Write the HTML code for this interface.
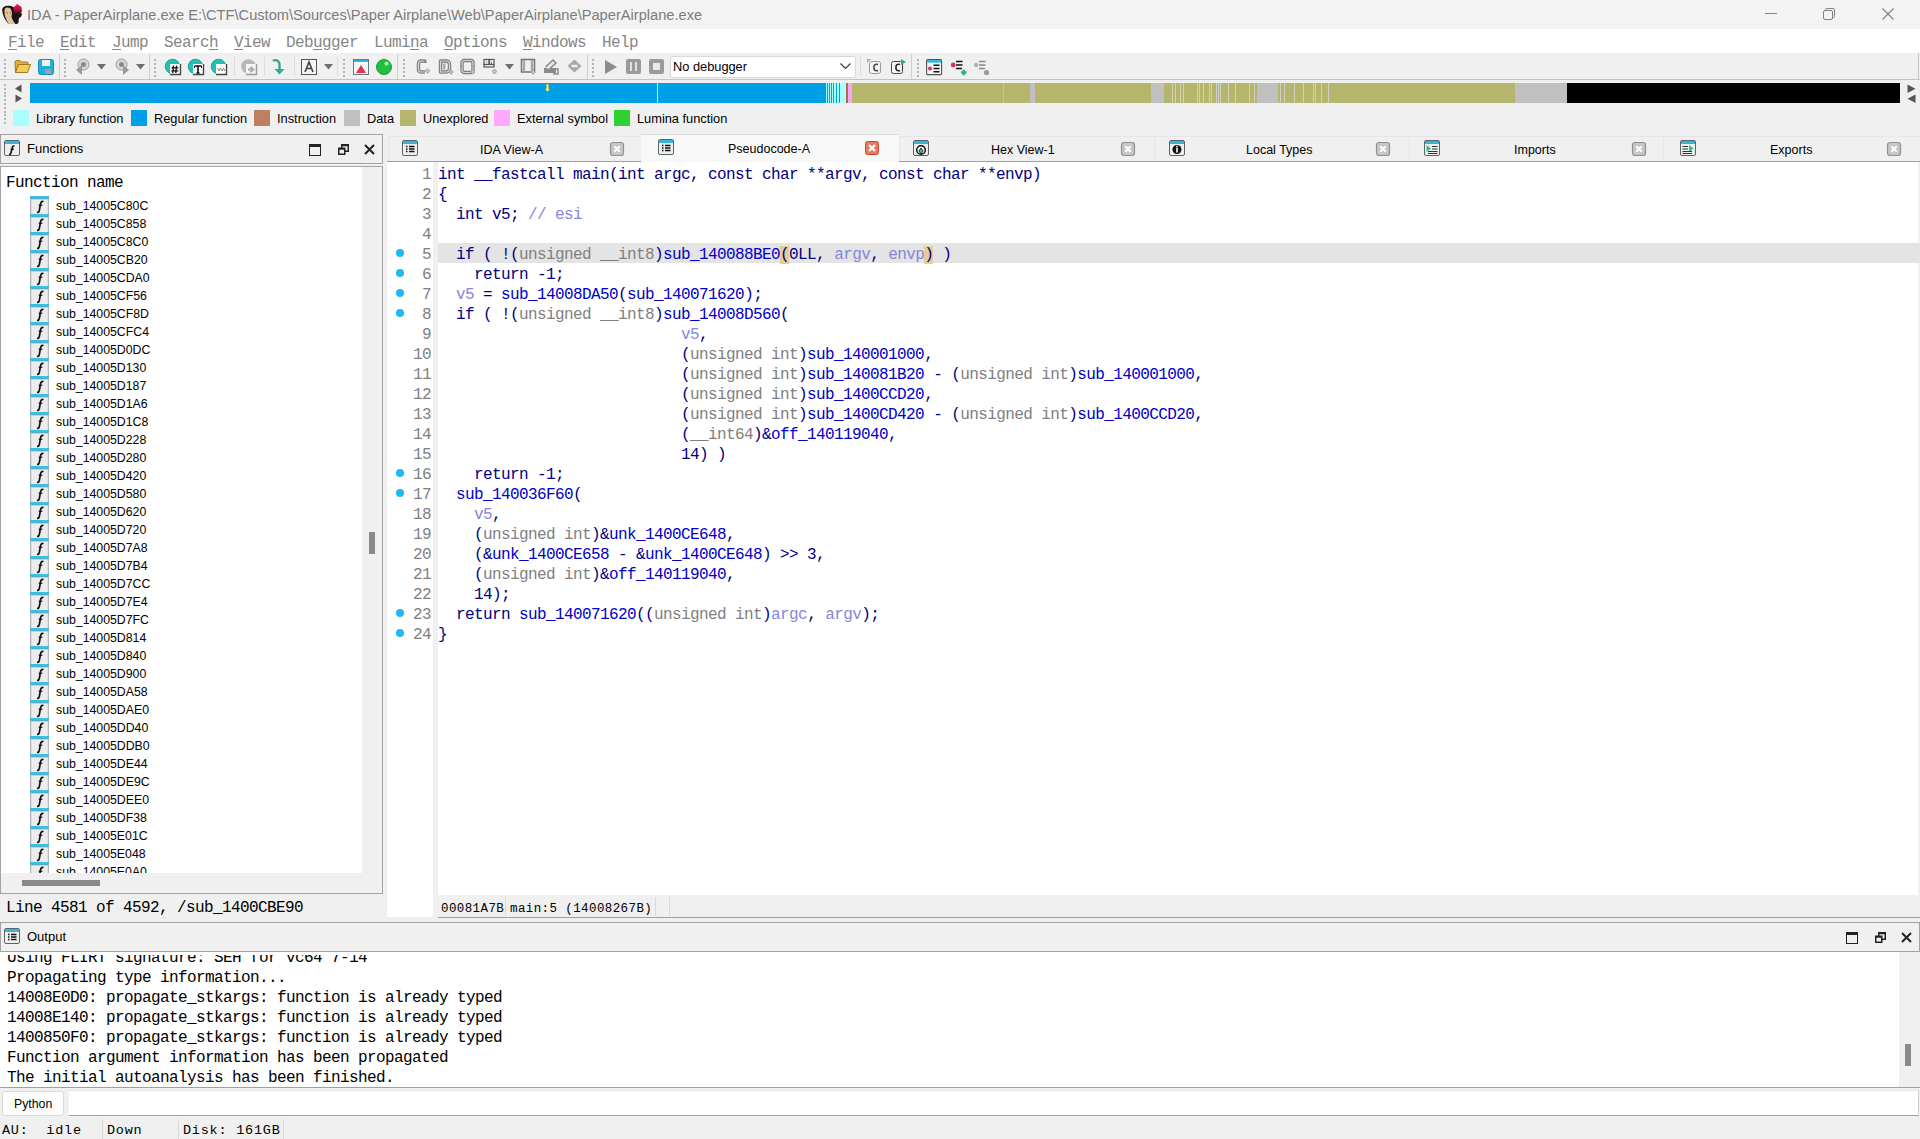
<!DOCTYPE html><html><head><meta charset="utf-8"><style>
*{margin:0;padding:0;box-sizing:border-box}
html,body{width:1920px;height:1139px;overflow:hidden;background:#f0f0f0;font-family:"Liberation Sans",sans-serif}
body{position:relative}
.a{position:absolute}
.m{font-family:"Liberation Mono",monospace;white-space:pre}
.s{font-family:"Liberation Sans",sans-serif;white-space:pre}
.mi{top:33px;font-size:16px;letter-spacing:-0.6px;color:#868686;line-height:20px}
.mi u{text-decoration:underline;text-underline-offset:1.5px}
.code{font-family:"Liberation Mono",monospace;font-size:16px;letter-spacing:-0.6px;line-height:20px;white-space:pre;color:#000080}
.g{color:#808080}.b{color:#0000c8}.p{color:#8686da}.c{color:#8686da}
.ln{font-family:"Liberation Mono",monospace;font-size:16px;letter-spacing:-0.6px;line-height:20px;white-space:pre;color:#808080;text-align:right}
svg{position:absolute;overflow:visible}
</style></head><body>
<div class="a" style="left:0;top:0;width:1920px;height:29px;background:#f3f3f3"></div>
<svg style="left:0;top:0" width="28" height="28" viewBox="0 0 28 28">
<defs><linearGradient id="fl" x1="0" y1="0" x2="0" y2="1"><stop offset="0" stop-color="#f01860"/><stop offset="0.55" stop-color="#c01048"/><stop offset="1" stop-color="#401020"/></linearGradient></defs>
<path d="M2.2 10.5 C2 7 5 5.5 9 5.8 C12 6 14 7 16 9 L21.5 13 C22.5 15.5 21 17.5 19 18 L18.5 21 C19 23 18 24 16 24 L8.5 24 C6 21 3 17 2.2 10.5Z" fill="#1c1412"/>
<path d="M4.6 9.5 C5 7.2 8.5 7 10.5 8.5 C12 10.5 12.3 13.5 11.5 16.5 C12 19 13.5 21.5 15.5 24 L8.5 24 C7.5 21.5 6.5 20 6 18.5 C4.5 16 4.2 12.5 4.6 9.5Z" fill="#dfc49a"/>
<path d="M6 13 Q7 12.5 8 13 M9.5 13 Q10.5 12.5 11 13" stroke="#8a7050" stroke-width="0.8" fill="none"/>
<path d="M13.5 7.5 L17 4 L21.5 7 L22 11.5 L19.5 13.5 L14.5 13 Z" fill="url(#fl)"/>
</svg>
<div class="a s" style="left:27px;top:6px;font-size:14.65px;line-height:18px;color:#7c7c7c">IDA - PaperAirplane.exe E:\CTF\Custom\Sources\Paper Airplane\Web\PaperAirplane\PaperAirplane.exe</div>
<div class="a" style="left:1765px;top:13px;width:12px;height:1px;background:#808080"></div>
<svg style="left:1823px;top:8px" width="12" height="12"><rect x="0.5" y="2.5" width="9" height="9" rx="1.5" fill="none" stroke="#808080"/><path d="M2.5 2.5 V1.5 Q2.5 .5 3.5 .5 H10 Q11.5 .5 11.5 2 V8.5 Q11.5 9.5 10.5 9.5 H9.5" fill="none" stroke="#808080"/></svg>
<svg style="left:1882px;top:8px" width="12" height="12"><path d="M0.5 0.5 L11.5 11.5 M11.5 0.5 L0.5 11.5" stroke="#808080" stroke-width="1.1"/></svg>
<div class="a" style="left:0;top:29px;width:1920px;height:24px;background:#fff"></div>
<div class="a m mi" style="left:8px"><u>F</u>ile</div>
<div class="a m mi" style="left:60px"><u>E</u>dit</div>
<div class="a m mi" style="left:112px"><u>J</u>ump</div>
<div class="a m mi" style="left:164px">Searc<u>h</u></div>
<div class="a m mi" style="left:234px"><u>V</u>iew</div>
<div class="a m mi" style="left:286px">Deb<u>u</u>gger</div>
<div class="a m mi" style="left:374px">Lumi<u>n</u>a</div>
<div class="a m mi" style="left:444px"><u>O</u>ptions</div>
<div class="a m mi" style="left:523px"><u>W</u>indows</div>
<div class="a m mi" style="left:602px">Help</div>
<div class="a" style="left:0;top:53px;width:1920px;height:27px;background:#f0f0f0;border-bottom:1px solid #c4c4c4"></div>
<div class="a" style="left:1918px;top:53px;width:1px;height:27px;background:#c8c8c8"></div>
<div class="a" style="left:4px;top:58.5px;width:2px;height:2px;background:#b4b4b4"></div>
<div class="a" style="left:4px;top:62.5px;width:2px;height:2px;background:#b4b4b4"></div>
<div class="a" style="left:4px;top:66.5px;width:2px;height:2px;background:#b4b4b4"></div>
<div class="a" style="left:4px;top:70.5px;width:2px;height:2px;background:#b4b4b4"></div>
<div class="a" style="left:4px;top:74.5px;width:2px;height:2px;background:#b4b4b4"></div>
<div class="a" style="left:64px;top:58.5px;width:2px;height:2px;background:#b4b4b4"></div>
<div class="a" style="left:64px;top:62.5px;width:2px;height:2px;background:#b4b4b4"></div>
<div class="a" style="left:64px;top:66.5px;width:2px;height:2px;background:#b4b4b4"></div>
<div class="a" style="left:64px;top:70.5px;width:2px;height:2px;background:#b4b4b4"></div>
<div class="a" style="left:64px;top:74.5px;width:2px;height:2px;background:#b4b4b4"></div>
<div class="a" style="left:154px;top:58.5px;width:2px;height:2px;background:#b4b4b4"></div>
<div class="a" style="left:154px;top:62.5px;width:2px;height:2px;background:#b4b4b4"></div>
<div class="a" style="left:154px;top:66.5px;width:2px;height:2px;background:#b4b4b4"></div>
<div class="a" style="left:154px;top:70.5px;width:2px;height:2px;background:#b4b4b4"></div>
<div class="a" style="left:154px;top:74.5px;width:2px;height:2px;background:#b4b4b4"></div>
<div class="a" style="left:343px;top:58.5px;width:2px;height:2px;background:#b4b4b4"></div>
<div class="a" style="left:343px;top:62.5px;width:2px;height:2px;background:#b4b4b4"></div>
<div class="a" style="left:343px;top:66.5px;width:2px;height:2px;background:#b4b4b4"></div>
<div class="a" style="left:343px;top:70.5px;width:2px;height:2px;background:#b4b4b4"></div>
<div class="a" style="left:343px;top:74.5px;width:2px;height:2px;background:#b4b4b4"></div>
<div class="a" style="left:403px;top:58.5px;width:2px;height:2px;background:#b4b4b4"></div>
<div class="a" style="left:403px;top:62.5px;width:2px;height:2px;background:#b4b4b4"></div>
<div class="a" style="left:403px;top:66.5px;width:2px;height:2px;background:#b4b4b4"></div>
<div class="a" style="left:403px;top:70.5px;width:2px;height:2px;background:#b4b4b4"></div>
<div class="a" style="left:403px;top:74.5px;width:2px;height:2px;background:#b4b4b4"></div>
<div class="a" style="left:592px;top:58.5px;width:2px;height:2px;background:#b4b4b4"></div>
<div class="a" style="left:592px;top:62.5px;width:2px;height:2px;background:#b4b4b4"></div>
<div class="a" style="left:592px;top:66.5px;width:2px;height:2px;background:#b4b4b4"></div>
<div class="a" style="left:592px;top:70.5px;width:2px;height:2px;background:#b4b4b4"></div>
<div class="a" style="left:592px;top:74.5px;width:2px;height:2px;background:#b4b4b4"></div>
<div class="a" style="left:917px;top:58.5px;width:2px;height:2px;background:#b4b4b4"></div>
<div class="a" style="left:917px;top:62.5px;width:2px;height:2px;background:#b4b4b4"></div>
<div class="a" style="left:917px;top:66.5px;width:2px;height:2px;background:#b4b4b4"></div>
<div class="a" style="left:917px;top:70.5px;width:2px;height:2px;background:#b4b4b4"></div>
<div class="a" style="left:917px;top:74.5px;width:2px;height:2px;background:#b4b4b4"></div>
<div class="a" style="left:59px;top:54px;width:1px;height:25px;background:#d0d0d0"></div>
<div class="a" style="left:149px;top:54px;width:1px;height:25px;background:#d0d0d0"></div>
<div class="a" style="left:397px;top:54px;width:1px;height:25px;background:#d0d0d0"></div>
<div class="a" style="left:587px;top:54px;width:1px;height:25px;background:#d0d0d0"></div>
<div class="a" style="left:911px;top:54px;width:1px;height:25px;background:#d0d0d0"></div>
<div class="a" style="left:234px;top:57px;width:1px;height:19px;background:#dcdcdc"></div>
<div class="a" style="left:264px;top:57px;width:1px;height:19px;background:#dcdcdc"></div>
<div class="a" style="left:294px;top:57px;width:1px;height:19px;background:#dcdcdc"></div>
<div class="a" style="left:337px;top:57px;width:1px;height:19px;background:#dcdcdc"></div>
<div class="a" style="left:860px;top:57px;width:1px;height:19px;background:#dcdcdc"></div>
<svg style="left:14px;top:59px" width="17" height="15"><path d="M1 3 Q1 1.5 2.5 1.5 H6 L7.5 3 H13 Q14 3 14 4 V5.5 H4.5 L1.5 13.5Z" fill="#e0b040" stroke="#a07820" stroke-width="1"/><path d="M4.5 5.5 H16.5 L13.5 13.5 H1.5Z" fill="#f5cc5a" stroke="#a07820" stroke-width="1"/></svg>
<svg style="left:38px;top:59px" width="16" height="16"><rect x="0.5" y="0.5" width="15" height="15" rx="2" fill="#20b0e0" stroke="#1090c0"/><rect x="4" y="1" width="8" height="6" fill="#f0f0f0"/><rect x="7" y="10" width="6" height="5" fill="#a0a0a0"/></svg>
<svg style="left:75px;top:58px" width="15" height="17"><circle cx="8.5" cy="6.5" r="5.5" fill="#d8d8d8" stroke="#9a9a9a"/><circle cx="8.5" cy="6.5" r="2.5" fill="#8a8a8a"/><path d="M1 12 L7 7 V17Z" fill="#9a9a9a"/></svg>
<svg style="left:97px;top:64px" width="10" height="6"><path d="M0 0 H9 L4.5 5.5Z" fill="#6e6e6e"/></svg>
<svg style="left:115px;top:58px" width="15" height="17"><circle cx="6.5" cy="6.5" r="5.5" fill="#d8d8d8" stroke="#9a9a9a"/><circle cx="6.5" cy="6.5" r="2.5" fill="#8a8a8a"/><path d="M14 12 L8 7 V17Z" fill="#9a9a9a"/></svg>
<svg style="left:136px;top:64px" width="10" height="6"><path d="M0 0 H9 L4.5 5.5Z" fill="#6e6e6e"/></svg>
<svg style="left:165px;top:59px" width="17" height="17"><circle cx="7.5" cy="7.5" r="7.3" fill="#22c0b0" stroke="#139888" stroke-width="0.8"/><rect x="5" y="5" width="10.5" height="10.5" fill="#fff"/><path d="M15.5 5 V15.5 H5" stroke="#444" stroke-width="1.4" fill="none"/><path d="M8.5 6.5 L7.8 14 M11.5 6.5 L10.8 14 M6.5 8.8 H13.5 M6.3 11.8 H13.3" stroke="#111" stroke-width="1.3"/></svg>
<svg style="left:188px;top:59px" width="17" height="17"><circle cx="7.5" cy="7.5" r="7.3" fill="#22c0b0" stroke="#139888" stroke-width="0.8"/><rect x="5" y="5" width="10.5" height="10.5" fill="#fff"/><path d="M15.5 5 V15.5 H5" stroke="#444" stroke-width="1.4" fill="none"/><path d="M6.5 7 H13.5 M10 7 V14 M8.5 14 H11.5" stroke="#111" stroke-width="1.6"/><path d="M6.5 7 V9 M13.5 7 V9" stroke="#111" stroke-width="1"/></svg>
<svg style="left:211px;top:59px" width="17" height="17"><circle cx="7.5" cy="7.5" r="7.3" fill="#22c0b0" stroke="#139888" stroke-width="0.8"/><rect x="5" y="5" width="10.5" height="10.5" fill="#fff"/><path d="M15.5 5 V15.5 H5" stroke="#444" stroke-width="1.4" fill="none"/><path d="M6.5 9 L8 12 L9.5 9 L11 12 L12.5 9 L14 12" stroke="#888" stroke-width="1" fill="none"/></svg>
<svg style="left:241px;top:59px" width="17" height="17"><circle cx="7.5" cy="7.5" r="7.3" fill="#b8b8b8"/><rect x="5" y="5" width="10.5" height="10.5" fill="#f4f4f4"/><path d="M15.5 5 V15.5 H5" stroke="#999" stroke-width="1.4" fill="none"/><path d="M7 10.5 H11 M9.5 8 L12.5 10.5 L9.5 13" stroke="#aaa" stroke-width="1.8" fill="none"/></svg>
<svg style="left:272px;top:59px" width="14" height="17"><path d="M1 2 Q2 0.8 4 1.2 Q7.5 2 7.5 6 V11" stroke="#3aa898" stroke-width="2.4" fill="none"/><path d="M2.5 10 H12.5 L7.5 15.5Z" fill="#3aa898"/></svg>
<svg style="left:301px;top:59px" width="17" height="16"><rect x="0.5" y="0.5" width="15" height="15" fill="#f4f4f4" stroke="#555"/><path d="M4 13 L8 3 L12 13 M5.5 9.5 H10.5" stroke="#444" stroke-width="1.6" fill="none"/></svg>
<svg style="left:324px;top:64px" width="10" height="6"><path d="M0 0 H9 L4.5 5.5Z" fill="#6e6e6e"/></svg>
<svg style="left:353px;top:59px" width="17" height="17"><rect x="0.5" y="0.5" width="15" height="15" fill="#f8f8f8" stroke="#6a7a80"/><rect x="1" y="1" width="14" height="2" fill="#30b0e0"/><path d="M3 14 L8 6 L13 14Z" fill="#e8304a"/></svg>
<svg style="left:376px;top:59px" width="17" height="17"><circle cx="8" cy="8" r="7.5" fill="#20c040" stroke="#10a030"/><circle cx="10.5" cy="4.5" r="2" fill="#b0f0b8"/></svg>
<svg style="left:416px;top:58px" width="15" height="17"><path d="M9.5 3 H5 Q2.5 3 2.5 5.5 V11.5 Q2.5 14 5 14 H9" stroke="#7c7c7c" stroke-width="3.4" fill="none" stroke-linejoin="round"/><path d="M9.5 3 H5 Q2.5 3 2.5 5.5 V11.5 Q2.5 14 5 14 H9" stroke="#d6d6d6" stroke-width="1.2" fill="none" stroke-linejoin="round"/><path d="M9.5 2 V5" stroke="#7c7c7c" stroke-width="2"/><path d="M9.3 13 H13.7 M11.5 10.8 V15.2" stroke="#9a9a9a" stroke-width="2.2"/><path d="M10.3 13 H12.7 M11.5 11.8 V14.2" stroke="#e0e0e0" stroke-width="0.8"/></svg>
<svg style="left:438px;top:58px" width="16" height="17"><path d="M2.5 3 H8 Q11.5 3 11.5 6.5 V10.5 Q11.5 14 8 14 H2.5Z" stroke="#7c7c7c" stroke-width="3.4" fill="none" stroke-linejoin="round"/><path d="M2.5 3 H8 Q11.5 3 11.5 6.5 V10.5 Q11.5 14 8 14 H2.5Z" stroke="#d6d6d6" stroke-width="1.2" fill="none" stroke-linejoin="round"/><rect x="5" y="5.5" width="2.5" height="6" fill="#aaa"/><path d="M10.8 14 H15.2 M13 11.8 V16.2" stroke="#9a9a9a" stroke-width="2.2"/><path d="M11.8 14 H14.2 M13 12.8 V15.2" stroke="#e0e0e0" stroke-width="0.8"/></svg>
<svg style="left:460px;top:58px" width="16" height="17"><path d="M4.5 2.5 H11 Q13 2.5 13 5 V12 Q13 14.5 11 14.5 H4.5 Q2 14.5 2 12 V5 Q2 2.5 4.5 2.5Z" stroke="#7c7c7c" stroke-width="3.4" fill="none" stroke-linejoin="round"/><path d="M4.5 2.5 H11 Q13 2.5 13 5 V12 Q13 14.5 11 14.5 H4.5 Q2 14.5 2 12 V5 Q2 2.5 4.5 2.5Z" stroke="#d6d6d6" stroke-width="1.2" fill="none" stroke-linejoin="round"/><path d="M1 8.5 H2 M13 8.5 H14" stroke="#888" stroke-width="1.5"/><path d="M10.3 14 H14.7 M12.5 11.8 V16.2" stroke="#9a9a9a" stroke-width="2.2"/><path d="M11.3 14 H13.7 M12.5 12.8 V15.2" stroke="#e0e0e0" stroke-width="0.8"/></svg>
<svg style="left:483px;top:58px" width="16" height="17"><rect x="1" y="1.5" width="5" height="5" fill="#f4f4f4" stroke="#555" stroke-width="1.2"/><rect x="6.5" y="1.5" width="4.5" height="5" fill="#f4f4f4" stroke="#555" stroke-width="1.2"/><rect x="1" y="6.5" width="10" height="2.5" fill="#f4f4f4" stroke="#555" stroke-width="1.2"/><path d="M3 4 H4 M8.5 4 V6" stroke="#777" stroke-width="1"/><path d="M9.3 13.5 H13.7 M11.5 11.3 V15.7" stroke="#9a9a9a" stroke-width="2.2"/><path d="M10.3 13.5 H12.7 M11.5 12.3 V14.7" stroke="#e0e0e0" stroke-width="0.8"/></svg>
<svg style="left:505px;top:64px" width="10" height="6"><path d="M0 0 H9 L4.5 5.5Z" fill="#6e6e6e"/></svg>
<svg style="left:520px;top:58px" width="17" height="17"><rect x="1.5" y="1.5" width="13" height="12.5" fill="none" stroke="#7a7a7a" stroke-width="1.6"/><path d="M4 2 V13.5 M12 2 V13.5" stroke="#a8a8a8" stroke-width="2.4"/><path d="M10.8 14 H15.2 M13 11.8 V16.2" stroke="#9a9a9a" stroke-width="2.2"/><path d="M11.8 14 H14.2 M13 12.8 V15.2" stroke="#e0e0e0" stroke-width="0.8"/></svg>
<svg style="left:543px;top:58px" width="17" height="17"><path d="M1 10 H13 V15 H1Z" fill="#8a8a8a"/><path d="M2.5 9 L10 2 L13 5 L6 11.5" fill="#e8e8e8" stroke="#8a8a8a" stroke-width="1.5"/><path d="M13 11 H15 V16 H10" stroke="#8a8a8a" stroke-width="1.5" fill="none"/></svg>
<svg style="left:567px;top:58px" width="16" height="17"><path d="M7.5 1.5 L14.5 8 L7.5 14.5 L0.5 8Z" fill="#a8a8a8"/><rect x="4.5" y="6.8" width="6" height="2.4" fill="#f0f0f0"/></svg>
<svg style="left:604px;top:59px" width="14" height="16"><path d="M1 1 L13 8 L1 15Z" fill="#8c8c8c"/></svg>
<div class="a" style="left:626px;top:59px;width:15px;height:15px;background:#9a9a9a;border-radius:2px"></div><div class="a" style="left:630px;top:62px;width:2px;height:9px;background:#e0e0e0"></div><div class="a" style="left:635px;top:62px;width:2px;height:9px;background:#e0e0e0"></div>
<div class="a" style="left:649px;top:59px;width:15px;height:15px;background:#9a9a9a;border-radius:2px"></div><div class="a" style="left:653px;top:63px;width:7px;height:7px;background:#e8e8e8"></div>
<div class="a" style="left:670px;top:56px;width:186px;height:22px;background:#fff;border:1px solid #d8d8d8;border-radius:2px"></div>
<div class="a s" style="left:673px;top:59px;font-size:12.8px;line-height:16px;color:#000">No debugger</div>
<svg style="left:840px;top:63px" width="11" height="7"><path d="M0.5 0.5 L5.5 5.5 L10.5 0.5" stroke="#333" fill="none" stroke-width="1.1"/></svg>
<svg style="left:866px;top:58px" width="17" height="17"><rect x="3.5" y="3.5" width="11" height="12" rx="2" fill="#f4f4f4" stroke="#999"/><path d="M1 1 L5 1 L1 5Z" fill="#aaa"/><path d="M12 6.5 Q9 5.5 8 8 V11 Q9 13.5 12 12.5" stroke="#444" stroke-width="1.6" fill="none"/></svg>
<svg style="left:890px;top:58px" width="17" height="17"><rect x="1.5" y="3.5" width="11" height="12" rx="2" fill="#f4f4f4" stroke="#444"/><path d="M10 6.5 Q7 5.5 6 8 V11 Q7 13.5 10 12.5" stroke="#222" stroke-width="1.6" fill="none"/><path d="M11 1 L16 4 L11 7Z" fill="#30b070"/></svg>
<svg style="left:926px;top:59px" width="17" height="17"><rect x="0.6" y="0.6" width="15" height="15" rx="1.2" fill="#f6f6f6" stroke="#505050" stroke-width="1.1"/><rect x="1.1" y="1.1" width="14" height="2.6" fill="#30b8e0"/><circle cx="4" cy="9.5" r="2" fill="#e03058"/><path d="M7.5 6.3 H13.5 M7.5 9.5 H13.5 M7.5 12.7 H13.5" stroke="#111" stroke-width="1.5"/></svg>
<svg style="left:950px;top:58px" width="18" height="18"><circle cx="3.2" cy="7" r="2.4" fill="#e03058"/><path d="M6 3.5 H12.5 M6 7 H12.5 M6 10.5 H12" stroke="#111" stroke-width="1.7"/><path d="M11 14.5 H16.5 M13.75 11.8 V17.2" stroke="#30b880" stroke-width="2.6"/></svg>
<svg style="left:973px;top:58px" width="18" height="18"><circle cx="3.2" cy="7" r="2.2" fill="#b0b0b0"/><path d="M6 3.5 H12.5 M6 7 H12.5 M6 10.5 H12" stroke="#888" stroke-width="1.7"/><circle cx="13.5" cy="14.5" r="2.6" fill="#999"/></svg>
<div class="a" style="left:4px;top:84.0px;width:2px;height:2px;background:#b4b4b4"></div>
<div class="a" style="left:4px;top:87.8px;width:2px;height:2px;background:#b4b4b4"></div>
<div class="a" style="left:4px;top:91.6px;width:2px;height:2px;background:#b4b4b4"></div>
<div class="a" style="left:4px;top:95.4px;width:2px;height:2px;background:#b4b4b4"></div>
<div class="a" style="left:4px;top:99.2px;width:2px;height:2px;background:#b4b4b4"></div>
<div class="a" style="left:4px;top:103.0px;width:2px;height:2px;background:#b4b4b4"></div>
<div class="a" style="left:4px;top:106.8px;width:2px;height:2px;background:#b4b4b4"></div>
<div class="a" style="left:4px;top:110.6px;width:2px;height:2px;background:#b4b4b4"></div>
<div class="a" style="left:4px;top:114.4px;width:2px;height:2px;background:#b4b4b4"></div>
<div class="a" style="left:4px;top:118.2px;width:2px;height:2px;background:#b4b4b4"></div>
<div class="a" style="left:4px;top:122.0px;width:2px;height:2px;background:#b4b4b4"></div>
<svg style="left:15px;top:84px" width="8" height="19"><path d="M6.5 0.5 V8.5 L0 4.5Z" fill="#555"/><path d="M0.5 10.5 V18.5 L7 14.5Z" fill="#555"/></svg>
<svg style="left:1907px;top:84px" width="9" height="20"><path d="M0.5 0.5 V9 L8.5 4.75Z" fill="#555"/><path d="M8.5 10.5 V19 L0.5 14.75Z" fill="#555"/></svg>
<div class="a" style="left:30px;top:83px;width:796px;height:20px;background:#00a0e6"></div>
<div class="a" style="left:826px;top:83px;width:20px;height:20px;background:#a8ffff"></div>
<div class="a" style="left:846px;top:83px;width:2px;height:20px;background:#b06a50"></div>
<div class="a" style="left:848px;top:83px;width:4px;height:20px;background:#f0a8f0"></div>
<div class="a" style="left:852px;top:83px;width:299px;height:20px;background:#b5b56b"></div>
<div class="a" style="left:1151px;top:83px;width:13px;height:20px;background:#c0c0c0"></div>
<div class="a" style="left:1164px;top:83px;width:93px;height:20px;background:#b5b56b"></div>
<div class="a" style="left:1257px;top:83px;width:21px;height:20px;background:#c0c0c0"></div>
<div class="a" style="left:1278px;top:83px;width:237px;height:20px;background:#b5b56b"></div>
<div class="a" style="left:1515px;top:83px;width:52px;height:20px;background:#c0c0c0"></div>
<div class="a" style="left:1567px;top:83px;width:333px;height:20px;background:#000"></div>
<div class="a" style="left:827px;top:83px;width:1px;height:20px;background:#00a0e6"></div>
<div class="a" style="left:829px;top:83px;width:1px;height:20px;background:#00a0e6"></div>
<div class="a" style="left:831px;top:83px;width:1px;height:20px;background:#00a0e6"></div>
<div class="a" style="left:833px;top:83px;width:1px;height:20px;background:#00a0e6"></div>
<div class="a" style="left:836px;top:83px;width:1px;height:20px;background:#00a0e6"></div>
<div class="a" style="left:839px;top:83px;width:1px;height:20px;background:#00a0e6"></div>
<div class="a" style="left:657px;top:83px;width:1px;height:20px;background:#a8ffff"></div>
<div class="a" style="left:1003px;top:83px;width:1px;height:20px;background:#c0c0c0"></div>
<div class="a" style="left:1030px;top:83px;width:1px;height:20px;background:#c0c0c0"></div>
<div class="a" style="left:1031px;top:83px;width:1px;height:20px;background:#c0c0c0"></div>
<div class="a" style="left:1032px;top:83px;width:1px;height:20px;background:#c0c0c0"></div>
<div class="a" style="left:1033px;top:83px;width:1px;height:20px;background:#c0c0c0"></div>
<div class="a" style="left:1034px;top:83px;width:1px;height:20px;background:#c0c0c0"></div>
<div class="a" style="left:1172px;top:83px;width:1px;height:20px;background:#d0d0c0"></div>
<div class="a" style="left:1175px;top:83px;width:1px;height:20px;background:#d0d0c0"></div>
<div class="a" style="left:1180px;top:83px;width:1px;height:20px;background:#d0d0c0"></div>
<div class="a" style="left:1183px;top:83px;width:1px;height:20px;background:#d0d0c0"></div>
<div class="a" style="left:1197px;top:83px;width:1px;height:20px;background:#d0d0c0"></div>
<div class="a" style="left:1199px;top:83px;width:1px;height:20px;background:#d0d0c0"></div>
<div class="a" style="left:1203px;top:83px;width:1px;height:20px;background:#d0d0c0"></div>
<div class="a" style="left:1209px;top:83px;width:1px;height:20px;background:#d0d0c0"></div>
<div class="a" style="left:1211px;top:83px;width:1px;height:20px;background:#d0d0c0"></div>
<div class="a" style="left:1216px;top:83px;width:1px;height:20px;background:#d0d0c0"></div>
<div class="a" style="left:1218px;top:83px;width:1px;height:20px;background:#d0d0c0"></div>
<div class="a" style="left:1220px;top:83px;width:1px;height:20px;background:#d0d0c0"></div>
<div class="a" style="left:1228px;top:83px;width:1px;height:20px;background:#d0d0c0"></div>
<div class="a" style="left:1235px;top:83px;width:1px;height:20px;background:#d0d0c0"></div>
<div class="a" style="left:1249px;top:83px;width:1px;height:20px;background:#d0d0c0"></div>
<div class="a" style="left:1254px;top:83px;width:1px;height:20px;background:#d0d0c0"></div>
<div class="a" style="left:1280px;top:83px;width:1px;height:20px;background:#d0d0c0"></div>
<div class="a" style="left:1284px;top:83px;width:1px;height:20px;background:#d0d0c0"></div>
<div class="a" style="left:1294px;top:83px;width:1px;height:20px;background:#d0d0c0"></div>
<div class="a" style="left:1303px;top:83px;width:1px;height:20px;background:#d0d0c0"></div>
<div class="a" style="left:1313px;top:83px;width:1px;height:20px;background:#d0d0c0"></div>
<div class="a" style="left:1315px;top:83px;width:1px;height:20px;background:#d0d0c0"></div>
<div class="a" style="left:1321px;top:83px;width:1px;height:20px;background:#d0d0c0"></div>
<div class="a" style="left:1328px;top:83px;width:1px;height:20px;background:#d0d0c0"></div>
<svg style="left:543px;top:83px" width="9" height="20"><path d="M3.2 1 H5.8 V5.8 H7.4 L4.5 9 L1.6 5.8 H3.2Z" fill="#f4f478" stroke="#2a6a50" stroke-width="0.4"/><path d="M4.5 9 V20" stroke="#5a8aa8" stroke-width="1"/></svg>
<div class="a" style="left:13px;top:110px;width:16px;height:16px;background:#a8ffff"></div>
<div class="a s" style="left:36px;top:111px;font-size:12.8px;line-height:16px;color:#000">Library function</div>
<div class="a" style="left:131px;top:110px;width:16px;height:16px;background:#00a0e6"></div>
<div class="a s" style="left:154px;top:111px;font-size:12.8px;line-height:16px;color:#000">Regular function</div>
<div class="a" style="left:254px;top:110px;width:16px;height:16px;background:#c08060"></div>
<div class="a s" style="left:277px;top:111px;font-size:12.8px;line-height:16px;color:#000">Instruction</div>
<div class="a" style="left:344px;top:110px;width:16px;height:16px;background:#c0c0c0"></div>
<div class="a s" style="left:367px;top:111px;font-size:12.8px;line-height:16px;color:#000">Data</div>
<div class="a" style="left:400px;top:110px;width:16px;height:16px;background:#b5b56b"></div>
<div class="a s" style="left:423px;top:111px;font-size:12.8px;line-height:16px;color:#000">Unexplored</div>
<div class="a" style="left:494px;top:110px;width:16px;height:16px;background:#ffa8ff"></div>
<div class="a s" style="left:517px;top:111px;font-size:12.8px;line-height:16px;color:#000">External symbol</div>
<div class="a" style="left:614px;top:110px;width:16px;height:16px;background:#30d030"></div>
<div class="a s" style="left:637px;top:111px;font-size:12.8px;line-height:16px;color:#000">Lumina function</div>
<div class="a" style="left:0;top:134px;width:383px;height:30px;background:#f0f0f0;border:1px solid #a3a3a3"></div>
<svg style="left:4px;top:140px" width="16" height="16"><rect x="0.5" y="0.5" width="15" height="15" rx="1.5" fill="#eef0f0" stroke="#5c6468"/><rect x="1" y="1" width="14" height="3" fill="#38b4dc"/><path d="M10.5 6.2 Q9 5.6 8.4 7.2 L7 12.8 Q6.6 14.6 5 14.2" stroke="#111" stroke-width="1.6" fill="none"/><path d="M6.5 9.2 H10" stroke="#111" stroke-width="1.1"/></svg>
<div class="a s" style="left:27px;top:141px;font-size:13px;line-height:16px;color:#000">Functions</div>
<div class="a" style="left:309px;top:144px;width:12px;height:12px;border:1.5px solid #222;border-top-width:3px"></div>
<svg style="left:338px;top:144px" width="11" height="11"><rect x="0.75" y="4.25" width="6" height="6" fill="none" stroke="#222" stroke-width="1.5"/><path d="M3.75 4.25 V0.75 H10.25 V7.25 H6.75" fill="none" stroke="#222" stroke-width="1.5"/><path d="M0.75 5 H6.75 M3.75 1.5 H10.25" stroke="#222" stroke-width="1.5"/></svg>
<svg style="left:364px;top:144px" width="11" height="11"><path d="M1 1 L10 10 M10 1 L1 10" stroke="#222" stroke-width="2"/></svg>
<div class="a" style="left:0;top:166px;width:383px;height:728px;background:#f0f0f0;border:1px solid #a3a3a3"></div>
<div class="a" style="left:1px;top:167px;width:361px;height:706px;background:#fff;overflow:hidden" id="flist">
<div class="a m" style="left:5px;top:6px;font-size:16px;letter-spacing:-0.6px;line-height:20px;color:#000">Function name</div>
<svg style="left:29px;top:29px" width="19" height="18"><rect x="0" y="0" width="19" height="2.4" fill="#34c2e4"/><rect x="0" y="2.4" width="19" height="1.1" fill="#1a8cac"/><rect x="0" y="3.5" width="19" height="14.5" fill="#ececec"/><rect x="0" y="3.5" width="1.2" height="14.5" fill="#b0b0b0"/><rect x="17.8" y="3.5" width="1.2" height="14.5" fill="#b8b8b8"/><path d="M13.4 5.9 Q12.3 5.0 11.3 6.0 Q10.7 6.8 10.5 8 L9.3 14.6 Q8.9 16.7 7.0 16.4" stroke="#111" stroke-width="1.7" fill="none"/><path d="M8.7 9.3 H12.3" stroke="#111" stroke-width="1.2"/></svg>
<div class="a s" style="left:55px;top:31px;font-size:12.3px;line-height:16px;color:#000">sub_14005C80C</div>
<svg style="left:29px;top:47px" width="19" height="18"><rect x="0" y="0" width="19" height="2.4" fill="#34c2e4"/><rect x="0" y="2.4" width="19" height="1.1" fill="#1a8cac"/><rect x="0" y="3.5" width="19" height="14.5" fill="#ececec"/><rect x="0" y="3.5" width="1.2" height="14.5" fill="#b0b0b0"/><rect x="17.8" y="3.5" width="1.2" height="14.5" fill="#b8b8b8"/><path d="M13.4 5.9 Q12.3 5.0 11.3 6.0 Q10.7 6.8 10.5 8 L9.3 14.6 Q8.9 16.7 7.0 16.4" stroke="#111" stroke-width="1.7" fill="none"/><path d="M8.7 9.3 H12.3" stroke="#111" stroke-width="1.2"/></svg>
<div class="a s" style="left:55px;top:49px;font-size:12.3px;line-height:16px;color:#000">sub_14005C858</div>
<svg style="left:29px;top:65px" width="19" height="18"><rect x="0" y="0" width="19" height="2.4" fill="#34c2e4"/><rect x="0" y="2.4" width="19" height="1.1" fill="#1a8cac"/><rect x="0" y="3.5" width="19" height="14.5" fill="#ececec"/><rect x="0" y="3.5" width="1.2" height="14.5" fill="#b0b0b0"/><rect x="17.8" y="3.5" width="1.2" height="14.5" fill="#b8b8b8"/><path d="M13.4 5.9 Q12.3 5.0 11.3 6.0 Q10.7 6.8 10.5 8 L9.3 14.6 Q8.9 16.7 7.0 16.4" stroke="#111" stroke-width="1.7" fill="none"/><path d="M8.7 9.3 H12.3" stroke="#111" stroke-width="1.2"/></svg>
<div class="a s" style="left:55px;top:67px;font-size:12.3px;line-height:16px;color:#000">sub_14005C8C0</div>
<svg style="left:29px;top:83px" width="19" height="18"><rect x="0" y="0" width="19" height="2.4" fill="#34c2e4"/><rect x="0" y="2.4" width="19" height="1.1" fill="#1a8cac"/><rect x="0" y="3.5" width="19" height="14.5" fill="#ececec"/><rect x="0" y="3.5" width="1.2" height="14.5" fill="#b0b0b0"/><rect x="17.8" y="3.5" width="1.2" height="14.5" fill="#b8b8b8"/><path d="M13.4 5.9 Q12.3 5.0 11.3 6.0 Q10.7 6.8 10.5 8 L9.3 14.6 Q8.9 16.7 7.0 16.4" stroke="#111" stroke-width="1.7" fill="none"/><path d="M8.7 9.3 H12.3" stroke="#111" stroke-width="1.2"/></svg>
<div class="a s" style="left:55px;top:85px;font-size:12.3px;line-height:16px;color:#000">sub_14005CB20</div>
<svg style="left:29px;top:101px" width="19" height="18"><rect x="0" y="0" width="19" height="2.4" fill="#34c2e4"/><rect x="0" y="2.4" width="19" height="1.1" fill="#1a8cac"/><rect x="0" y="3.5" width="19" height="14.5" fill="#ececec"/><rect x="0" y="3.5" width="1.2" height="14.5" fill="#b0b0b0"/><rect x="17.8" y="3.5" width="1.2" height="14.5" fill="#b8b8b8"/><path d="M13.4 5.9 Q12.3 5.0 11.3 6.0 Q10.7 6.8 10.5 8 L9.3 14.6 Q8.9 16.7 7.0 16.4" stroke="#111" stroke-width="1.7" fill="none"/><path d="M8.7 9.3 H12.3" stroke="#111" stroke-width="1.2"/></svg>
<div class="a s" style="left:55px;top:103px;font-size:12.3px;line-height:16px;color:#000">sub_14005CDA0</div>
<svg style="left:29px;top:119px" width="19" height="18"><rect x="0" y="0" width="19" height="2.4" fill="#34c2e4"/><rect x="0" y="2.4" width="19" height="1.1" fill="#1a8cac"/><rect x="0" y="3.5" width="19" height="14.5" fill="#ececec"/><rect x="0" y="3.5" width="1.2" height="14.5" fill="#b0b0b0"/><rect x="17.8" y="3.5" width="1.2" height="14.5" fill="#b8b8b8"/><path d="M13.4 5.9 Q12.3 5.0 11.3 6.0 Q10.7 6.8 10.5 8 L9.3 14.6 Q8.9 16.7 7.0 16.4" stroke="#111" stroke-width="1.7" fill="none"/><path d="M8.7 9.3 H12.3" stroke="#111" stroke-width="1.2"/></svg>
<div class="a s" style="left:55px;top:121px;font-size:12.3px;line-height:16px;color:#000">sub_14005CF56</div>
<svg style="left:29px;top:137px" width="19" height="18"><rect x="0" y="0" width="19" height="2.4" fill="#34c2e4"/><rect x="0" y="2.4" width="19" height="1.1" fill="#1a8cac"/><rect x="0" y="3.5" width="19" height="14.5" fill="#ececec"/><rect x="0" y="3.5" width="1.2" height="14.5" fill="#b0b0b0"/><rect x="17.8" y="3.5" width="1.2" height="14.5" fill="#b8b8b8"/><path d="M13.4 5.9 Q12.3 5.0 11.3 6.0 Q10.7 6.8 10.5 8 L9.3 14.6 Q8.9 16.7 7.0 16.4" stroke="#111" stroke-width="1.7" fill="none"/><path d="M8.7 9.3 H12.3" stroke="#111" stroke-width="1.2"/></svg>
<div class="a s" style="left:55px;top:139px;font-size:12.3px;line-height:16px;color:#000">sub_14005CF8D</div>
<svg style="left:29px;top:155px" width="19" height="18"><rect x="0" y="0" width="19" height="2.4" fill="#34c2e4"/><rect x="0" y="2.4" width="19" height="1.1" fill="#1a8cac"/><rect x="0" y="3.5" width="19" height="14.5" fill="#ececec"/><rect x="0" y="3.5" width="1.2" height="14.5" fill="#b0b0b0"/><rect x="17.8" y="3.5" width="1.2" height="14.5" fill="#b8b8b8"/><path d="M13.4 5.9 Q12.3 5.0 11.3 6.0 Q10.7 6.8 10.5 8 L9.3 14.6 Q8.9 16.7 7.0 16.4" stroke="#111" stroke-width="1.7" fill="none"/><path d="M8.7 9.3 H12.3" stroke="#111" stroke-width="1.2"/></svg>
<div class="a s" style="left:55px;top:157px;font-size:12.3px;line-height:16px;color:#000">sub_14005CFC4</div>
<svg style="left:29px;top:173px" width="19" height="18"><rect x="0" y="0" width="19" height="2.4" fill="#34c2e4"/><rect x="0" y="2.4" width="19" height="1.1" fill="#1a8cac"/><rect x="0" y="3.5" width="19" height="14.5" fill="#ececec"/><rect x="0" y="3.5" width="1.2" height="14.5" fill="#b0b0b0"/><rect x="17.8" y="3.5" width="1.2" height="14.5" fill="#b8b8b8"/><path d="M13.4 5.9 Q12.3 5.0 11.3 6.0 Q10.7 6.8 10.5 8 L9.3 14.6 Q8.9 16.7 7.0 16.4" stroke="#111" stroke-width="1.7" fill="none"/><path d="M8.7 9.3 H12.3" stroke="#111" stroke-width="1.2"/></svg>
<div class="a s" style="left:55px;top:175px;font-size:12.3px;line-height:16px;color:#000">sub_14005D0DC</div>
<svg style="left:29px;top:191px" width="19" height="18"><rect x="0" y="0" width="19" height="2.4" fill="#34c2e4"/><rect x="0" y="2.4" width="19" height="1.1" fill="#1a8cac"/><rect x="0" y="3.5" width="19" height="14.5" fill="#ececec"/><rect x="0" y="3.5" width="1.2" height="14.5" fill="#b0b0b0"/><rect x="17.8" y="3.5" width="1.2" height="14.5" fill="#b8b8b8"/><path d="M13.4 5.9 Q12.3 5.0 11.3 6.0 Q10.7 6.8 10.5 8 L9.3 14.6 Q8.9 16.7 7.0 16.4" stroke="#111" stroke-width="1.7" fill="none"/><path d="M8.7 9.3 H12.3" stroke="#111" stroke-width="1.2"/></svg>
<div class="a s" style="left:55px;top:193px;font-size:12.3px;line-height:16px;color:#000">sub_14005D130</div>
<svg style="left:29px;top:209px" width="19" height="18"><rect x="0" y="0" width="19" height="2.4" fill="#34c2e4"/><rect x="0" y="2.4" width="19" height="1.1" fill="#1a8cac"/><rect x="0" y="3.5" width="19" height="14.5" fill="#ececec"/><rect x="0" y="3.5" width="1.2" height="14.5" fill="#b0b0b0"/><rect x="17.8" y="3.5" width="1.2" height="14.5" fill="#b8b8b8"/><path d="M13.4 5.9 Q12.3 5.0 11.3 6.0 Q10.7 6.8 10.5 8 L9.3 14.6 Q8.9 16.7 7.0 16.4" stroke="#111" stroke-width="1.7" fill="none"/><path d="M8.7 9.3 H12.3" stroke="#111" stroke-width="1.2"/></svg>
<div class="a s" style="left:55px;top:211px;font-size:12.3px;line-height:16px;color:#000">sub_14005D187</div>
<svg style="left:29px;top:227px" width="19" height="18"><rect x="0" y="0" width="19" height="2.4" fill="#34c2e4"/><rect x="0" y="2.4" width="19" height="1.1" fill="#1a8cac"/><rect x="0" y="3.5" width="19" height="14.5" fill="#ececec"/><rect x="0" y="3.5" width="1.2" height="14.5" fill="#b0b0b0"/><rect x="17.8" y="3.5" width="1.2" height="14.5" fill="#b8b8b8"/><path d="M13.4 5.9 Q12.3 5.0 11.3 6.0 Q10.7 6.8 10.5 8 L9.3 14.6 Q8.9 16.7 7.0 16.4" stroke="#111" stroke-width="1.7" fill="none"/><path d="M8.7 9.3 H12.3" stroke="#111" stroke-width="1.2"/></svg>
<div class="a s" style="left:55px;top:229px;font-size:12.3px;line-height:16px;color:#000">sub_14005D1A6</div>
<svg style="left:29px;top:245px" width="19" height="18"><rect x="0" y="0" width="19" height="2.4" fill="#34c2e4"/><rect x="0" y="2.4" width="19" height="1.1" fill="#1a8cac"/><rect x="0" y="3.5" width="19" height="14.5" fill="#ececec"/><rect x="0" y="3.5" width="1.2" height="14.5" fill="#b0b0b0"/><rect x="17.8" y="3.5" width="1.2" height="14.5" fill="#b8b8b8"/><path d="M13.4 5.9 Q12.3 5.0 11.3 6.0 Q10.7 6.8 10.5 8 L9.3 14.6 Q8.9 16.7 7.0 16.4" stroke="#111" stroke-width="1.7" fill="none"/><path d="M8.7 9.3 H12.3" stroke="#111" stroke-width="1.2"/></svg>
<div class="a s" style="left:55px;top:247px;font-size:12.3px;line-height:16px;color:#000">sub_14005D1C8</div>
<svg style="left:29px;top:263px" width="19" height="18"><rect x="0" y="0" width="19" height="2.4" fill="#34c2e4"/><rect x="0" y="2.4" width="19" height="1.1" fill="#1a8cac"/><rect x="0" y="3.5" width="19" height="14.5" fill="#ececec"/><rect x="0" y="3.5" width="1.2" height="14.5" fill="#b0b0b0"/><rect x="17.8" y="3.5" width="1.2" height="14.5" fill="#b8b8b8"/><path d="M13.4 5.9 Q12.3 5.0 11.3 6.0 Q10.7 6.8 10.5 8 L9.3 14.6 Q8.9 16.7 7.0 16.4" stroke="#111" stroke-width="1.7" fill="none"/><path d="M8.7 9.3 H12.3" stroke="#111" stroke-width="1.2"/></svg>
<div class="a s" style="left:55px;top:265px;font-size:12.3px;line-height:16px;color:#000">sub_14005D228</div>
<svg style="left:29px;top:281px" width="19" height="18"><rect x="0" y="0" width="19" height="2.4" fill="#34c2e4"/><rect x="0" y="2.4" width="19" height="1.1" fill="#1a8cac"/><rect x="0" y="3.5" width="19" height="14.5" fill="#ececec"/><rect x="0" y="3.5" width="1.2" height="14.5" fill="#b0b0b0"/><rect x="17.8" y="3.5" width="1.2" height="14.5" fill="#b8b8b8"/><path d="M13.4 5.9 Q12.3 5.0 11.3 6.0 Q10.7 6.8 10.5 8 L9.3 14.6 Q8.9 16.7 7.0 16.4" stroke="#111" stroke-width="1.7" fill="none"/><path d="M8.7 9.3 H12.3" stroke="#111" stroke-width="1.2"/></svg>
<div class="a s" style="left:55px;top:283px;font-size:12.3px;line-height:16px;color:#000">sub_14005D280</div>
<svg style="left:29px;top:299px" width="19" height="18"><rect x="0" y="0" width="19" height="2.4" fill="#34c2e4"/><rect x="0" y="2.4" width="19" height="1.1" fill="#1a8cac"/><rect x="0" y="3.5" width="19" height="14.5" fill="#ececec"/><rect x="0" y="3.5" width="1.2" height="14.5" fill="#b0b0b0"/><rect x="17.8" y="3.5" width="1.2" height="14.5" fill="#b8b8b8"/><path d="M13.4 5.9 Q12.3 5.0 11.3 6.0 Q10.7 6.8 10.5 8 L9.3 14.6 Q8.9 16.7 7.0 16.4" stroke="#111" stroke-width="1.7" fill="none"/><path d="M8.7 9.3 H12.3" stroke="#111" stroke-width="1.2"/></svg>
<div class="a s" style="left:55px;top:301px;font-size:12.3px;line-height:16px;color:#000">sub_14005D420</div>
<svg style="left:29px;top:317px" width="19" height="18"><rect x="0" y="0" width="19" height="2.4" fill="#34c2e4"/><rect x="0" y="2.4" width="19" height="1.1" fill="#1a8cac"/><rect x="0" y="3.5" width="19" height="14.5" fill="#ececec"/><rect x="0" y="3.5" width="1.2" height="14.5" fill="#b0b0b0"/><rect x="17.8" y="3.5" width="1.2" height="14.5" fill="#b8b8b8"/><path d="M13.4 5.9 Q12.3 5.0 11.3 6.0 Q10.7 6.8 10.5 8 L9.3 14.6 Q8.9 16.7 7.0 16.4" stroke="#111" stroke-width="1.7" fill="none"/><path d="M8.7 9.3 H12.3" stroke="#111" stroke-width="1.2"/></svg>
<div class="a s" style="left:55px;top:319px;font-size:12.3px;line-height:16px;color:#000">sub_14005D580</div>
<svg style="left:29px;top:335px" width="19" height="18"><rect x="0" y="0" width="19" height="2.4" fill="#34c2e4"/><rect x="0" y="2.4" width="19" height="1.1" fill="#1a8cac"/><rect x="0" y="3.5" width="19" height="14.5" fill="#ececec"/><rect x="0" y="3.5" width="1.2" height="14.5" fill="#b0b0b0"/><rect x="17.8" y="3.5" width="1.2" height="14.5" fill="#b8b8b8"/><path d="M13.4 5.9 Q12.3 5.0 11.3 6.0 Q10.7 6.8 10.5 8 L9.3 14.6 Q8.9 16.7 7.0 16.4" stroke="#111" stroke-width="1.7" fill="none"/><path d="M8.7 9.3 H12.3" stroke="#111" stroke-width="1.2"/></svg>
<div class="a s" style="left:55px;top:337px;font-size:12.3px;line-height:16px;color:#000">sub_14005D620</div>
<svg style="left:29px;top:353px" width="19" height="18"><rect x="0" y="0" width="19" height="2.4" fill="#34c2e4"/><rect x="0" y="2.4" width="19" height="1.1" fill="#1a8cac"/><rect x="0" y="3.5" width="19" height="14.5" fill="#ececec"/><rect x="0" y="3.5" width="1.2" height="14.5" fill="#b0b0b0"/><rect x="17.8" y="3.5" width="1.2" height="14.5" fill="#b8b8b8"/><path d="M13.4 5.9 Q12.3 5.0 11.3 6.0 Q10.7 6.8 10.5 8 L9.3 14.6 Q8.9 16.7 7.0 16.4" stroke="#111" stroke-width="1.7" fill="none"/><path d="M8.7 9.3 H12.3" stroke="#111" stroke-width="1.2"/></svg>
<div class="a s" style="left:55px;top:355px;font-size:12.3px;line-height:16px;color:#000">sub_14005D720</div>
<svg style="left:29px;top:371px" width="19" height="18"><rect x="0" y="0" width="19" height="2.4" fill="#34c2e4"/><rect x="0" y="2.4" width="19" height="1.1" fill="#1a8cac"/><rect x="0" y="3.5" width="19" height="14.5" fill="#ececec"/><rect x="0" y="3.5" width="1.2" height="14.5" fill="#b0b0b0"/><rect x="17.8" y="3.5" width="1.2" height="14.5" fill="#b8b8b8"/><path d="M13.4 5.9 Q12.3 5.0 11.3 6.0 Q10.7 6.8 10.5 8 L9.3 14.6 Q8.9 16.7 7.0 16.4" stroke="#111" stroke-width="1.7" fill="none"/><path d="M8.7 9.3 H12.3" stroke="#111" stroke-width="1.2"/></svg>
<div class="a s" style="left:55px;top:373px;font-size:12.3px;line-height:16px;color:#000">sub_14005D7A8</div>
<svg style="left:29px;top:389px" width="19" height="18"><rect x="0" y="0" width="19" height="2.4" fill="#34c2e4"/><rect x="0" y="2.4" width="19" height="1.1" fill="#1a8cac"/><rect x="0" y="3.5" width="19" height="14.5" fill="#ececec"/><rect x="0" y="3.5" width="1.2" height="14.5" fill="#b0b0b0"/><rect x="17.8" y="3.5" width="1.2" height="14.5" fill="#b8b8b8"/><path d="M13.4 5.9 Q12.3 5.0 11.3 6.0 Q10.7 6.8 10.5 8 L9.3 14.6 Q8.9 16.7 7.0 16.4" stroke="#111" stroke-width="1.7" fill="none"/><path d="M8.7 9.3 H12.3" stroke="#111" stroke-width="1.2"/></svg>
<div class="a s" style="left:55px;top:391px;font-size:12.3px;line-height:16px;color:#000">sub_14005D7B4</div>
<svg style="left:29px;top:407px" width="19" height="18"><rect x="0" y="0" width="19" height="2.4" fill="#34c2e4"/><rect x="0" y="2.4" width="19" height="1.1" fill="#1a8cac"/><rect x="0" y="3.5" width="19" height="14.5" fill="#ececec"/><rect x="0" y="3.5" width="1.2" height="14.5" fill="#b0b0b0"/><rect x="17.8" y="3.5" width="1.2" height="14.5" fill="#b8b8b8"/><path d="M13.4 5.9 Q12.3 5.0 11.3 6.0 Q10.7 6.8 10.5 8 L9.3 14.6 Q8.9 16.7 7.0 16.4" stroke="#111" stroke-width="1.7" fill="none"/><path d="M8.7 9.3 H12.3" stroke="#111" stroke-width="1.2"/></svg>
<div class="a s" style="left:55px;top:409px;font-size:12.3px;line-height:16px;color:#000">sub_14005D7CC</div>
<svg style="left:29px;top:425px" width="19" height="18"><rect x="0" y="0" width="19" height="2.4" fill="#34c2e4"/><rect x="0" y="2.4" width="19" height="1.1" fill="#1a8cac"/><rect x="0" y="3.5" width="19" height="14.5" fill="#ececec"/><rect x="0" y="3.5" width="1.2" height="14.5" fill="#b0b0b0"/><rect x="17.8" y="3.5" width="1.2" height="14.5" fill="#b8b8b8"/><path d="M13.4 5.9 Q12.3 5.0 11.3 6.0 Q10.7 6.8 10.5 8 L9.3 14.6 Q8.9 16.7 7.0 16.4" stroke="#111" stroke-width="1.7" fill="none"/><path d="M8.7 9.3 H12.3" stroke="#111" stroke-width="1.2"/></svg>
<div class="a s" style="left:55px;top:427px;font-size:12.3px;line-height:16px;color:#000">sub_14005D7E4</div>
<svg style="left:29px;top:443px" width="19" height="18"><rect x="0" y="0" width="19" height="2.4" fill="#34c2e4"/><rect x="0" y="2.4" width="19" height="1.1" fill="#1a8cac"/><rect x="0" y="3.5" width="19" height="14.5" fill="#ececec"/><rect x="0" y="3.5" width="1.2" height="14.5" fill="#b0b0b0"/><rect x="17.8" y="3.5" width="1.2" height="14.5" fill="#b8b8b8"/><path d="M13.4 5.9 Q12.3 5.0 11.3 6.0 Q10.7 6.8 10.5 8 L9.3 14.6 Q8.9 16.7 7.0 16.4" stroke="#111" stroke-width="1.7" fill="none"/><path d="M8.7 9.3 H12.3" stroke="#111" stroke-width="1.2"/></svg>
<div class="a s" style="left:55px;top:445px;font-size:12.3px;line-height:16px;color:#000">sub_14005D7FC</div>
<svg style="left:29px;top:461px" width="19" height="18"><rect x="0" y="0" width="19" height="2.4" fill="#34c2e4"/><rect x="0" y="2.4" width="19" height="1.1" fill="#1a8cac"/><rect x="0" y="3.5" width="19" height="14.5" fill="#ececec"/><rect x="0" y="3.5" width="1.2" height="14.5" fill="#b0b0b0"/><rect x="17.8" y="3.5" width="1.2" height="14.5" fill="#b8b8b8"/><path d="M13.4 5.9 Q12.3 5.0 11.3 6.0 Q10.7 6.8 10.5 8 L9.3 14.6 Q8.9 16.7 7.0 16.4" stroke="#111" stroke-width="1.7" fill="none"/><path d="M8.7 9.3 H12.3" stroke="#111" stroke-width="1.2"/></svg>
<div class="a s" style="left:55px;top:463px;font-size:12.3px;line-height:16px;color:#000">sub_14005D814</div>
<svg style="left:29px;top:479px" width="19" height="18"><rect x="0" y="0" width="19" height="2.4" fill="#34c2e4"/><rect x="0" y="2.4" width="19" height="1.1" fill="#1a8cac"/><rect x="0" y="3.5" width="19" height="14.5" fill="#ececec"/><rect x="0" y="3.5" width="1.2" height="14.5" fill="#b0b0b0"/><rect x="17.8" y="3.5" width="1.2" height="14.5" fill="#b8b8b8"/><path d="M13.4 5.9 Q12.3 5.0 11.3 6.0 Q10.7 6.8 10.5 8 L9.3 14.6 Q8.9 16.7 7.0 16.4" stroke="#111" stroke-width="1.7" fill="none"/><path d="M8.7 9.3 H12.3" stroke="#111" stroke-width="1.2"/></svg>
<div class="a s" style="left:55px;top:481px;font-size:12.3px;line-height:16px;color:#000">sub_14005D840</div>
<svg style="left:29px;top:497px" width="19" height="18"><rect x="0" y="0" width="19" height="2.4" fill="#34c2e4"/><rect x="0" y="2.4" width="19" height="1.1" fill="#1a8cac"/><rect x="0" y="3.5" width="19" height="14.5" fill="#ececec"/><rect x="0" y="3.5" width="1.2" height="14.5" fill="#b0b0b0"/><rect x="17.8" y="3.5" width="1.2" height="14.5" fill="#b8b8b8"/><path d="M13.4 5.9 Q12.3 5.0 11.3 6.0 Q10.7 6.8 10.5 8 L9.3 14.6 Q8.9 16.7 7.0 16.4" stroke="#111" stroke-width="1.7" fill="none"/><path d="M8.7 9.3 H12.3" stroke="#111" stroke-width="1.2"/></svg>
<div class="a s" style="left:55px;top:499px;font-size:12.3px;line-height:16px;color:#000">sub_14005D900</div>
<svg style="left:29px;top:515px" width="19" height="18"><rect x="0" y="0" width="19" height="2.4" fill="#34c2e4"/><rect x="0" y="2.4" width="19" height="1.1" fill="#1a8cac"/><rect x="0" y="3.5" width="19" height="14.5" fill="#ececec"/><rect x="0" y="3.5" width="1.2" height="14.5" fill="#b0b0b0"/><rect x="17.8" y="3.5" width="1.2" height="14.5" fill="#b8b8b8"/><path d="M13.4 5.9 Q12.3 5.0 11.3 6.0 Q10.7 6.8 10.5 8 L9.3 14.6 Q8.9 16.7 7.0 16.4" stroke="#111" stroke-width="1.7" fill="none"/><path d="M8.7 9.3 H12.3" stroke="#111" stroke-width="1.2"/></svg>
<div class="a s" style="left:55px;top:517px;font-size:12.3px;line-height:16px;color:#000">sub_14005DA58</div>
<svg style="left:29px;top:533px" width="19" height="18"><rect x="0" y="0" width="19" height="2.4" fill="#34c2e4"/><rect x="0" y="2.4" width="19" height="1.1" fill="#1a8cac"/><rect x="0" y="3.5" width="19" height="14.5" fill="#ececec"/><rect x="0" y="3.5" width="1.2" height="14.5" fill="#b0b0b0"/><rect x="17.8" y="3.5" width="1.2" height="14.5" fill="#b8b8b8"/><path d="M13.4 5.9 Q12.3 5.0 11.3 6.0 Q10.7 6.8 10.5 8 L9.3 14.6 Q8.9 16.7 7.0 16.4" stroke="#111" stroke-width="1.7" fill="none"/><path d="M8.7 9.3 H12.3" stroke="#111" stroke-width="1.2"/></svg>
<div class="a s" style="left:55px;top:535px;font-size:12.3px;line-height:16px;color:#000">sub_14005DAE0</div>
<svg style="left:29px;top:551px" width="19" height="18"><rect x="0" y="0" width="19" height="2.4" fill="#34c2e4"/><rect x="0" y="2.4" width="19" height="1.1" fill="#1a8cac"/><rect x="0" y="3.5" width="19" height="14.5" fill="#ececec"/><rect x="0" y="3.5" width="1.2" height="14.5" fill="#b0b0b0"/><rect x="17.8" y="3.5" width="1.2" height="14.5" fill="#b8b8b8"/><path d="M13.4 5.9 Q12.3 5.0 11.3 6.0 Q10.7 6.8 10.5 8 L9.3 14.6 Q8.9 16.7 7.0 16.4" stroke="#111" stroke-width="1.7" fill="none"/><path d="M8.7 9.3 H12.3" stroke="#111" stroke-width="1.2"/></svg>
<div class="a s" style="left:55px;top:553px;font-size:12.3px;line-height:16px;color:#000">sub_14005DD40</div>
<svg style="left:29px;top:569px" width="19" height="18"><rect x="0" y="0" width="19" height="2.4" fill="#34c2e4"/><rect x="0" y="2.4" width="19" height="1.1" fill="#1a8cac"/><rect x="0" y="3.5" width="19" height="14.5" fill="#ececec"/><rect x="0" y="3.5" width="1.2" height="14.5" fill="#b0b0b0"/><rect x="17.8" y="3.5" width="1.2" height="14.5" fill="#b8b8b8"/><path d="M13.4 5.9 Q12.3 5.0 11.3 6.0 Q10.7 6.8 10.5 8 L9.3 14.6 Q8.9 16.7 7.0 16.4" stroke="#111" stroke-width="1.7" fill="none"/><path d="M8.7 9.3 H12.3" stroke="#111" stroke-width="1.2"/></svg>
<div class="a s" style="left:55px;top:571px;font-size:12.3px;line-height:16px;color:#000">sub_14005DDB0</div>
<svg style="left:29px;top:587px" width="19" height="18"><rect x="0" y="0" width="19" height="2.4" fill="#34c2e4"/><rect x="0" y="2.4" width="19" height="1.1" fill="#1a8cac"/><rect x="0" y="3.5" width="19" height="14.5" fill="#ececec"/><rect x="0" y="3.5" width="1.2" height="14.5" fill="#b0b0b0"/><rect x="17.8" y="3.5" width="1.2" height="14.5" fill="#b8b8b8"/><path d="M13.4 5.9 Q12.3 5.0 11.3 6.0 Q10.7 6.8 10.5 8 L9.3 14.6 Q8.9 16.7 7.0 16.4" stroke="#111" stroke-width="1.7" fill="none"/><path d="M8.7 9.3 H12.3" stroke="#111" stroke-width="1.2"/></svg>
<div class="a s" style="left:55px;top:589px;font-size:12.3px;line-height:16px;color:#000">sub_14005DE44</div>
<svg style="left:29px;top:605px" width="19" height="18"><rect x="0" y="0" width="19" height="2.4" fill="#34c2e4"/><rect x="0" y="2.4" width="19" height="1.1" fill="#1a8cac"/><rect x="0" y="3.5" width="19" height="14.5" fill="#ececec"/><rect x="0" y="3.5" width="1.2" height="14.5" fill="#b0b0b0"/><rect x="17.8" y="3.5" width="1.2" height="14.5" fill="#b8b8b8"/><path d="M13.4 5.9 Q12.3 5.0 11.3 6.0 Q10.7 6.8 10.5 8 L9.3 14.6 Q8.9 16.7 7.0 16.4" stroke="#111" stroke-width="1.7" fill="none"/><path d="M8.7 9.3 H12.3" stroke="#111" stroke-width="1.2"/></svg>
<div class="a s" style="left:55px;top:607px;font-size:12.3px;line-height:16px;color:#000">sub_14005DE9C</div>
<svg style="left:29px;top:623px" width="19" height="18"><rect x="0" y="0" width="19" height="2.4" fill="#34c2e4"/><rect x="0" y="2.4" width="19" height="1.1" fill="#1a8cac"/><rect x="0" y="3.5" width="19" height="14.5" fill="#ececec"/><rect x="0" y="3.5" width="1.2" height="14.5" fill="#b0b0b0"/><rect x="17.8" y="3.5" width="1.2" height="14.5" fill="#b8b8b8"/><path d="M13.4 5.9 Q12.3 5.0 11.3 6.0 Q10.7 6.8 10.5 8 L9.3 14.6 Q8.9 16.7 7.0 16.4" stroke="#111" stroke-width="1.7" fill="none"/><path d="M8.7 9.3 H12.3" stroke="#111" stroke-width="1.2"/></svg>
<div class="a s" style="left:55px;top:625px;font-size:12.3px;line-height:16px;color:#000">sub_14005DEE0</div>
<svg style="left:29px;top:641px" width="19" height="18"><rect x="0" y="0" width="19" height="2.4" fill="#34c2e4"/><rect x="0" y="2.4" width="19" height="1.1" fill="#1a8cac"/><rect x="0" y="3.5" width="19" height="14.5" fill="#ececec"/><rect x="0" y="3.5" width="1.2" height="14.5" fill="#b0b0b0"/><rect x="17.8" y="3.5" width="1.2" height="14.5" fill="#b8b8b8"/><path d="M13.4 5.9 Q12.3 5.0 11.3 6.0 Q10.7 6.8 10.5 8 L9.3 14.6 Q8.9 16.7 7.0 16.4" stroke="#111" stroke-width="1.7" fill="none"/><path d="M8.7 9.3 H12.3" stroke="#111" stroke-width="1.2"/></svg>
<div class="a s" style="left:55px;top:643px;font-size:12.3px;line-height:16px;color:#000">sub_14005DF38</div>
<svg style="left:29px;top:659px" width="19" height="18"><rect x="0" y="0" width="19" height="2.4" fill="#34c2e4"/><rect x="0" y="2.4" width="19" height="1.1" fill="#1a8cac"/><rect x="0" y="3.5" width="19" height="14.5" fill="#ececec"/><rect x="0" y="3.5" width="1.2" height="14.5" fill="#b0b0b0"/><rect x="17.8" y="3.5" width="1.2" height="14.5" fill="#b8b8b8"/><path d="M13.4 5.9 Q12.3 5.0 11.3 6.0 Q10.7 6.8 10.5 8 L9.3 14.6 Q8.9 16.7 7.0 16.4" stroke="#111" stroke-width="1.7" fill="none"/><path d="M8.7 9.3 H12.3" stroke="#111" stroke-width="1.2"/></svg>
<div class="a s" style="left:55px;top:661px;font-size:12.3px;line-height:16px;color:#000">sub_14005E01C</div>
<svg style="left:29px;top:677px" width="19" height="18"><rect x="0" y="0" width="19" height="2.4" fill="#34c2e4"/><rect x="0" y="2.4" width="19" height="1.1" fill="#1a8cac"/><rect x="0" y="3.5" width="19" height="14.5" fill="#ececec"/><rect x="0" y="3.5" width="1.2" height="14.5" fill="#b0b0b0"/><rect x="17.8" y="3.5" width="1.2" height="14.5" fill="#b8b8b8"/><path d="M13.4 5.9 Q12.3 5.0 11.3 6.0 Q10.7 6.8 10.5 8 L9.3 14.6 Q8.9 16.7 7.0 16.4" stroke="#111" stroke-width="1.7" fill="none"/><path d="M8.7 9.3 H12.3" stroke="#111" stroke-width="1.2"/></svg>
<div class="a s" style="left:55px;top:679px;font-size:12.3px;line-height:16px;color:#000">sub_14005E048</div>
<svg style="left:29px;top:695px" width="19" height="18"><rect x="0" y="0" width="19" height="2.4" fill="#34c2e4"/><rect x="0" y="2.4" width="19" height="1.1" fill="#1a8cac"/><rect x="0" y="3.5" width="19" height="14.5" fill="#ececec"/><rect x="0" y="3.5" width="1.2" height="14.5" fill="#b0b0b0"/><rect x="17.8" y="3.5" width="1.2" height="14.5" fill="#b8b8b8"/><path d="M13.4 5.9 Q12.3 5.0 11.3 6.0 Q10.7 6.8 10.5 8 L9.3 14.6 Q8.9 16.7 7.0 16.4" stroke="#111" stroke-width="1.7" fill="none"/><path d="M8.7 9.3 H12.3" stroke="#111" stroke-width="1.2"/></svg>
<div class="a s" style="left:55px;top:697px;font-size:12.3px;line-height:16px;color:#000">sub_14005E0A0</div>
</div>
<div class="a" style="left:369px;top:532px;width:6px;height:22px;background:#8a8a8a"></div>
<div class="a" style="left:22px;top:880px;width:78px;height:6px;background:#8a8a8a"></div>
<div class="a m" style="left:6px;top:898px;font-size:16px;letter-spacing:-0.6px;line-height:20px;color:#000">Line 4581 of 4592, /sub_1400CBE90</div>
<div class="a" style="left:387px;top:161px;width:1533px;height:1px;background:#a0a0a0"></div>
<div class="a" style="left:388px;top:136px;width:253px;height:25px;background:#f0f0f0;border-top:1px solid #e6e6e6;border-left:1px solid #e6e6e6"></div>
<svg style="left:402px;top:140px" width="16" height="16"><rect x="0.5" y="0.5" width="15" height="15" rx="1.5" fill="#eef0f0" stroke="#5c6468"/><rect x="1" y="1" width="14" height="3" fill="#38b4dc"/><path d="M4 6.5 H5.5 M4 9 H5.5 M4 11.5 H5.5 M7 6.5 H12.5 M7 9 H12.5 M7 11.5 H12.5" stroke="#111" stroke-width="1.4"/></svg>
<div class="a s" style="left:480px;top:142px;font-size:12.5px;line-height:16px;color:#000">IDA View-A</div>
<svg style="left:610px;top:142px" width="14" height="14"><rect x="0.5" y="0.5" width="13" height="13" rx="2.5" fill="#c6c6c6" stroke="#929292" stroke-width="1.2"/><path d="M4.3 4.3 L9.7 9.7 M9.7 4.3 L4.3 9.7" stroke="#fff" stroke-width="2"/></svg>
<div class="a" style="left:641px;top:134px;width:258px;height:28px;background:#f8f8f8;border-top:1px solid #dcdcdc"></div>
<svg style="left:658px;top:139px" width="16" height="16"><rect x="0.5" y="0.5" width="15" height="15" rx="1.5" fill="#eef0f0" stroke="#5c6468"/><rect x="1" y="1" width="14" height="3" fill="#38b4dc"/><path d="M4 6.5 H5.5 M4 9 H5.5 M4 11.5 H5.5 M7 6.5 H12.5 M7 9 H12.5 M7 11.5 H12.5" stroke="#111" stroke-width="1.4"/></svg>
<div class="a s" style="left:728px;top:141px;font-size:12.5px;line-height:16px;color:#000">Pseudocode-A</div>
<svg style="left:865px;top:141px" width="14" height="14"><rect x="0.5" y="0.5" width="13" height="13" rx="2" fill="#e8785a" stroke="#c84a34"/><path d="M4 4 L10 10 M10 4 L4 10" stroke="#fff" stroke-width="2.2"/></svg>
<div class="a" style="left:899px;top:136px;width:255px;height:25px;background:#f0f0f0;border-top:1px solid #e6e6e6;border-left:1px solid #e6e6e6"></div>
<svg style="left:913px;top:140px" width="16" height="16"><rect x="0.5" y="0.5" width="15" height="15" rx="1.5" fill="#eef0f0" stroke="#5c6468"/><rect x="1" y="1" width="14" height="3" fill="#38b4dc"/><circle cx="8" cy="10" r="4.3" fill="none" stroke="#111" stroke-width="1.5"/><path d="M8 8 L10 11 L8 14 L6 11Z" fill="#30c090" stroke="#111" stroke-width="0.8"/></svg>
<div class="a s" style="left:991px;top:142px;font-size:12.5px;line-height:16px;color:#000">Hex View-1</div>
<svg style="left:1121px;top:142px" width="14" height="14"><rect x="0.5" y="0.5" width="13" height="13" rx="2.5" fill="#c6c6c6" stroke="#929292" stroke-width="1.2"/><path d="M4.3 4.3 L9.7 9.7 M9.7 4.3 L4.3 9.7" stroke="#fff" stroke-width="2"/></svg>
<div class="a" style="left:1154px;top:136px;width:255px;height:25px;background:#f0f0f0;border-top:1px solid #e6e6e6;border-left:1px solid #e6e6e6"></div>
<svg style="left:1169px;top:140px" width="16" height="16"><rect x="0.5" y="0.5" width="15" height="15" rx="1.5" fill="#eef0f0" stroke="#5c6468"/><rect x="1" y="1" width="14" height="3" fill="#38b4dc"/><circle cx="8" cy="9.5" r="4.5" fill="#111"/><path d="M8 8 V12.5" stroke="#fff" stroke-width="1.6"/><circle cx="8" cy="6.6" r="0.9" fill="#fff"/></svg>
<div class="a s" style="left:1246px;top:142px;font-size:12.5px;line-height:16px;color:#000">Local Types</div>
<svg style="left:1376px;top:142px" width="14" height="14"><rect x="0.5" y="0.5" width="13" height="13" rx="2.5" fill="#c6c6c6" stroke="#929292" stroke-width="1.2"/><path d="M4.3 4.3 L9.7 9.7 M9.7 4.3 L4.3 9.7" stroke="#fff" stroke-width="2"/></svg>
<div class="a" style="left:1409px;top:136px;width:254px;height:25px;background:#f0f0f0;border-top:1px solid #e6e6e6;border-left:1px solid #e6e6e6"></div>
<svg style="left:1424px;top:140px" width="16" height="16"><rect x="0.5" y="0.5" width="15" height="15" rx="1.5" fill="#eef0f0" stroke="#5c6468"/><rect x="1" y="1" width="14" height="3" fill="#38b4dc"/><path d="M2.5 5 L7 8.5 L2.5 12Z" fill="#30c080"/><path d="M8 6.5 H13.5 M8 9 H13.5 M4 11.5 H13.5 M4 13.5 H13.5" stroke="#333" stroke-width="1.1"/></svg>
<div class="a s" style="left:1514px;top:142px;font-size:12.5px;line-height:16px;color:#000">Imports</div>
<svg style="left:1632px;top:142px" width="14" height="14"><rect x="0.5" y="0.5" width="13" height="13" rx="2.5" fill="#c6c6c6" stroke="#929292" stroke-width="1.2"/><path d="M4.3 4.3 L9.7 9.7 M9.7 4.3 L4.3 9.7" stroke="#fff" stroke-width="2"/></svg>
<div class="a" style="left:1663px;top:136px;width:257px;height:25px;background:#f0f0f0;border-top:1px solid #e6e6e6;border-left:1px solid #e6e6e6"></div>
<svg style="left:1680px;top:140px" width="16" height="16"><rect x="0.5" y="0.5" width="15" height="15" rx="1.5" fill="#eef0f0" stroke="#5c6468"/><rect x="1" y="1" width="14" height="3" fill="#38b4dc"/><path d="M9 5 L13.5 8.5 L9 12Z" fill="#30c080"/><path d="M2.5 6.5 H8 M2.5 9 H8 M2.5 11.5 H12 M2.5 13.5 H12" stroke="#333" stroke-width="1.1"/></svg>
<div class="a s" style="left:1770px;top:142px;font-size:12.5px;line-height:16px;color:#000">Exports</div>
<svg style="left:1887px;top:142px" width="14" height="14"><rect x="0.5" y="0.5" width="13" height="13" rx="2.5" fill="#c6c6c6" stroke="#929292" stroke-width="1.2"/><path d="M4.3 4.3 L9.7 9.7 M9.7 4.3 L4.3 9.7" stroke="#fff" stroke-width="2"/></svg>
<div class="a" style="left:387px;top:162px;width:1531px;height:733px;background:#fff"></div>
<div class="a" style="left:387px;top:895px;width:46px;height:22px;background:#fff;border-bottom-right-radius:3px"></div>
<div class="a" style="left:433px;top:162px;width:5px;height:733px;background:#f0f0f0"></div>
<div class="a" style="left:438px;top:243px;width:1482px;height:20px;background:#e4e4e4"></div>
<div class="a code" style="left:438px;top:165px">int __fastcall main(int argc, const char **argv, const char **envp)
{
  int v5; <span class="c">// esi</span>

  if ( !(<span class="g">unsigned __int8</span>)<span class="b">sub_140088BE0</span><span style="background:#e6cc9a">(</span>0LL, <span class="p">argv</span>, <span class="p">envp</span><span style="background:#e6cc9a">)</span> )
    return -1;
  <span class="p">v5</span> = <span class="b">sub_14008DA50</span>(<span class="b">sub_140071620</span>);
  if ( !(<span class="g">unsigned __int8</span>)<span class="b">sub_14008D560</span>(
                           <span class="p">v5</span>,
                           (<span class="g">unsigned int</span>)<span class="b">sub_140001000</span>,
                           (<span class="g">unsigned int</span>)<span class="b">sub_140081B20</span> - (<span class="g">unsigned int</span>)<span class="b">sub_140001000</span>,
                           (<span class="g">unsigned int</span>)<span class="b">sub_1400CCD20</span>,
                           (<span class="g">unsigned int</span>)<span class="b">sub_1400CD420</span> - (<span class="g">unsigned int</span>)<span class="b">sub_1400CCD20</span>,
                           (<span class="g">__int64</span>)&amp;<span class="b">off_140119040</span>,
                           14) )
    return -1;
  <span class="b">sub_140036F60</span>(
    <span class="p">v5</span>,
    (<span class="g">unsigned int</span>)&amp;<span class="b">unk_1400CE648</span>,
    (&amp;<span class="b">unk_1400CE658</span> - &amp;<span class="b">unk_1400CE648</span>) &gt;&gt; 3,
    (<span class="g">unsigned int</span>)&amp;<span class="b">off_140119040</span>,
    14);
  return <span class="b">sub_140071620</span>((<span class="g">unsigned int</span>)<span class="p">argc</span>, <span class="p">argv</span>);
}</div>
<div class="a ln" style="left:395px;top:165px;width:36px">1
2
3
4
5
6
7
8
9
10
11
12
13
14
15
16
17
18
19
20
21
22
23
24</div>
<div class="a" style="left:396px;top:249px;width:8px;height:8px;border-radius:50%;background:#20b8f0"></div>
<div class="a" style="left:396px;top:269px;width:8px;height:8px;border-radius:50%;background:#20b8f0"></div>
<div class="a" style="left:396px;top:289px;width:8px;height:8px;border-radius:50%;background:#20b8f0"></div>
<div class="a" style="left:396px;top:309px;width:8px;height:8px;border-radius:50%;background:#20b8f0"></div>
<div class="a" style="left:396px;top:469px;width:8px;height:8px;border-radius:50%;background:#20b8f0"></div>
<div class="a" style="left:396px;top:489px;width:8px;height:8px;border-radius:50%;background:#20b8f0"></div>
<div class="a" style="left:396px;top:609px;width:8px;height:8px;border-radius:50%;background:#20b8f0"></div>
<div class="a" style="left:396px;top:629px;width:8px;height:8px;border-radius:50%;background:#20b8f0"></div>
<div class="a" style="left:438px;top:895px;width:1482px;height:23px;background:#f0f0f0;border-bottom:1px solid #a0a0a0"></div>
<div class="a m" style="left:441px;top:901px;font-size:12.5px;letter-spacing:0.4px;line-height:16px;color:#000">00081A7B</div>
<div class="a m" style="left:510px;top:901px;font-size:12.5px;letter-spacing:0.4px;line-height:16px;color:#000">main:5 (14008267B)</div>
<div class="a" style="left:505px;top:897px;width:1px;height:19px;background:#d8d8d8"></div>
<div class="a" style="left:655px;top:897px;width:1px;height:19px;background:#d8d8d8"></div>
<div class="a" style="left:669px;top:897px;width:1px;height:19px;background:#d8d8d8"></div>
<div class="a" style="left:0;top:922px;width:1920px;height:30px;background:#f0f0f0;border:1px solid #a3a3a3"></div>
<svg style="left:4px;top:928px" width="16" height="16"><rect x="0.5" y="0.5" width="15" height="15" rx="1.5" fill="#eef0f0" stroke="#5c6468"/><rect x="1" y="1" width="14" height="3" fill="#38b4dc"/><path d="M4 6.5 H5.5 M4 9 H5.5 M4 11.5 H5.5 M7 6.5 H12.5 M7 9 H12.5 M7 11.5 H12.5" stroke="#111" stroke-width="1.4"/></svg>
<div class="a s" style="left:27px;top:929px;font-size:13px;line-height:16px;color:#000">Output</div>
<div class="a" style="left:1846px;top:932px;width:12px;height:12px;border:1.5px solid #222;border-top-width:3px"></div>
<svg style="left:1875px;top:932px" width="11" height="11"><rect x="0.75" y="4.25" width="6" height="6" fill="none" stroke="#222" stroke-width="1.5"/><path d="M3.75 4.25 V0.75 H10.25 V7.25 H6.75" fill="none" stroke="#222" stroke-width="1.5"/><path d="M0.75 5 H6.75 M3.75 1.5 H10.25" stroke="#222" stroke-width="1.5"/></svg>
<svg style="left:1901px;top:932px" width="11" height="11"><path d="M1 1 L10 10 M10 1 L1 10" stroke="#222" stroke-width="2"/></svg>
<div class="a" style="left:0;top:952px;width:1920px;height:136px;background:#fff;border-bottom:1px solid #a0a0a0"></div>
<div class="a" style="left:1899px;top:952px;width:21px;height:135px;background:#f0f0f0"></div>
<div class="a" style="left:1905px;top:1044px;width:6px;height:22px;background:#8a8a8a"></div>
<div class="a" style="left:1px;top:955px;width:1897px;height:132px;overflow:hidden"><div class="a code" style="left:6px;top:-7px;color:#000">Using FLIRT signature: SEH for vc64 7-14
Propagating type information...
14008E0D0: propagate_stkargs: function is already typed
14008E140: propagate_stkargs: function is already typed
1400850F0: propagate_stkargs: function is already typed
Function argument information has been propagated
The initial autoanalysis has been finished.</div></div>
<div class="a" style="left:69px;top:1090px;width:1850px;height:26px;background:#fff;border-top:1px solid #e8e8e8;border-bottom:1px solid #a0a0a0;border-right:1px solid #d0d0d0"></div>
<div class="a" style="left:2px;top:1091px;width:62px;height:25px;background:#fdfdfd;border:1px solid #dadada;border-radius:3px"></div>
<div class="a s" style="left:14px;top:1096px;font-size:12.3px;line-height:16px;color:#000">Python</div>
<div class="a m" style="left:2px;top:1123px;font-size:13.5px;letter-spacing:0.77px;line-height:16px;color:#000">AU:  idle</div>
<div class="a m" style="left:107px;top:1123px;font-size:13.5px;letter-spacing:0.77px;line-height:16px;color:#000">Down</div>
<div class="a m" style="left:183px;top:1123px;font-size:13.5px;letter-spacing:0.77px;line-height:16px;color:#000">Disk: 161GB</div>
<div class="a" style="left:102px;top:1119px;width:1px;height:20px;background:#d8d8d8"></div>
<div class="a" style="left:178px;top:1119px;width:1px;height:20px;background:#d8d8d8"></div>
<div class="a" style="left:283px;top:1119px;width:1px;height:20px;background:#d8d8d8"></div>
</body></html>
